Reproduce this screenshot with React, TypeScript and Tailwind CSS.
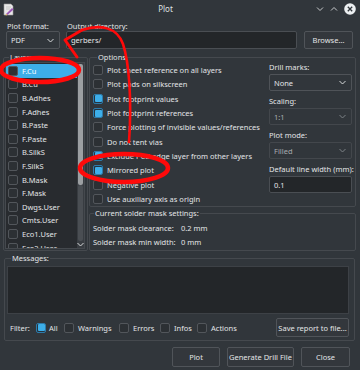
import React from 'react';

const layers = ['F.Cu', 'B.Cu', 'B.Adhes', 'F.Adhes', 'B.Paste', 'F.Paste', 'B.SilkS', 'F.SilkS', 'B.Mask', 'F.Mask', 'Dwgs.User', 'Cmts.User', 'Eco1.User', 'Eco2.User'];

const options: [string, boolean][] = [
    ['Plot sheet reference on all layers', false],
    ['Plot pads on silkscreen', false],
    ['Plot footprint values', true],
    ['Plot footprint references', true],
    ['Force plotting of invisible values/references', false],
    ['Do not tent vias', false],
    ['Exclude PCB edge layer from other layers', true],
    ['Mirrored plot', true],
    ['Negative plot', false],
    ['Use auxiliary axis as origin', false],
];

const Check = ({ on }: { on?: boolean }) => (
    <span className={`flex h-[10px] w-[10px] shrink-0 items-center justify-center rounded-[2px] border ${on ? 'border-[#2d7bab] bg-[#26343f]' : 'border-[#52565b] bg-[#2c3034]'}`}>
        {on && <span className="h-[7px] w-[7px] rounded-[1px] bg-[#3daee9]" />}
    </span>
);

const Chevron = ({ dim }: { dim?: boolean }) => (
    <svg width="7" height="5" viewBox="0 0 7 5">
        <path d="M0.5 1 L3.5 4 L6.5 1" fill="none" stroke={dim ? '#7d8186' : '#d6d8da'} strokeWidth="1" />
    </svg>
);

const Combo = ({ value, dim, className = '' }: { value: string; dim?: boolean; className?: string }) => (
    <div className={`flex items-center justify-between rounded-[2px] border ${dim ? 'border-[#43474c]' : 'border-[#4f5358]'} bg-[#31363b] pl-[4px] pr-[5px] ${className}`}>
        <span className={dim ? 'text-[#a9acaf]' : ''}>{value}</span>
        <Chevron dim={dim} />
    </div>
);

const Button = ({ children, className = '' }: { children: React.ReactNode; className?: string }) => (
    <div className={`flex items-center justify-center rounded-[2px] border border-[#505459] bg-[#33373c] ${className}`}>{children}</div>
);

const TitleBar = () => (
    <div className="flex h-[18px] items-center px-[3px]">
        <svg width="12" height="13" viewBox="0 0 12 13">
            <path d="M1 1 H8 L10 3 V12 H1 Z" fill="#e8e8e8" stroke="#9a9a9a" strokeWidth="0.6" />
            <path d="M3 4 H8 M3 6 H7" stroke="#b0b0b0" strokeWidth="0.6" />
            <path d="M3 11 L9 5 L10.5 6.5 L4.5 12 Z" fill="#9b59b6" />
            <path d="M3 11 L4.5 12 L2.6 12.4 Z" fill="#f0c040" />
        </svg>
        <div className="flex-1 text-center text-[8px] text-[#dfe1e3]">Plot</div>
        <div className="flex items-center gap-[6px] pr-[1px]">
            <svg width="8" height="6" viewBox="0 0 8 6"><path d="M1 1.5 L4 4.5 L7 1.5" fill="none" stroke="#c8cacc" strokeWidth="1" /></svg>
            <svg width="8" height="6" viewBox="0 0 8 6"><path d="M1 4.5 L4 1.5 L7 4.5" fill="none" stroke="#c8cacc" strokeWidth="1" /></svg>
            <svg width="12" height="12" viewBox="0 0 12 12">
                <circle cx="6" cy="6" r="5.8" fill="#eceff1" />
                <path d="M3.8 3.8 L8.2 8.2 M8.2 3.8 L3.8 8.2" stroke="#31363b" strokeWidth="1.3" />
            </svg>
        </div>
    </div>
);

export default function App() {
    return (
        <div className="relative flex h-[370px] w-[360px] flex-col overflow-hidden bg-[#31363b] font-['Noto_Sans',sans-serif] text-[7.5px] leading-[10px] text-[#e3e5e7]">
            <TitleBar />

            <div className="mt-[3px] flex items-end gap-[6px] pl-[6px]">
                <div className="w-[54px]">
                    <div className="h-[10px] pl-[1px]">Plot format:</div>
                    <Combo value="PDF" className="h-[18px]" />
                </div>
                <div className="w-[231px]">
                    <div className="h-[10px] pl-[1px]">Output directory:</div>
                    <div className="flex h-[18px] items-center rounded-[2px] border border-[#4a4e53] bg-[#232629] pl-[4px]">gerbers/</div>
                </div>
                <Button className="ml-[1px] h-[18px] w-[49px]">Browse...</Button>
            </div>

            <div className="mt-[3px] flex h-[199px] gap-[1px] pl-[3px]">
                <fieldset className="flex w-[85px] min-w-0 flex-col rounded-[2px] border border-[#45494e] pb-[1px] pl-[1px] pr-[2px]">
                    <legend className="ml-[4px] px-[1px]">Layers</legend>
                    <div className="flex min-h-0 flex-1 border border-[#45494e] bg-[#282b2f]">
                        <div className="flex-1 overflow-hidden pt-[1px]">
                            {layers.map((l, i) => (
                                <div key={l} className={`flex h-[13.6px] items-center gap-[4px] pl-[2px] ${i === 0 ? 'bg-[#3daee9] text-white' : ''}`}>
                                    <Check />
                                    <span>{l}</span>
                                </div>
                            ))}
                        </div>
                        <div className="flex w-[7px] flex-col items-center bg-[#383c41] py-[1px]">
                            <div className="h-[121px] w-[5px] rounded-[2px] bg-[#9c9fa2]" />
                            <div className="w-[5px] flex-1 rounded-[2px] bg-[#4a4e53]" />
                            <div className="mt-[1px]"><Chevron /></div>
                        </div>
                    </div>
                </fieldset>

                <div className="flex w-[267px] flex-col">
                    <fieldset className="flex h-[155px] rounded-[2px] border border-[#45494e] pl-[3px]">
                        <legend className="ml-[4px] px-[1px]">Options</legend>
                        <div className="flex-1 pt-[1px]">
                            {options.map(([t, on]) => (
                                <div key={t} className="flex h-[14.3px] items-center gap-[4px] whitespace-nowrap">
                                    <Check on={on} />
                                    <span>{t}</span>
                                </div>
                            ))}
                        </div>
                        <div className="flex w-[86px] flex-col gap-[5px] pr-[3px]">
                            <div>
                                <div className="h-[10px]">Drill marks:</div>
                                <Combo value="None" className="mt-[2px] h-[17px]" />
                            </div>
                            <div>
                                <div className="h-[10px]">Scaling:</div>
                                <Combo value="1:1" dim className="mt-[2px] h-[17px]" />
                            </div>
                            <div>
                                <div className="h-[10px]">Plot mode:</div>
                                <Combo value="Filled" dim className="mt-[2px] h-[17px]" />
                            </div>
                            <div>
                                <div className="h-[10px] whitespace-nowrap">Default line width (mm):</div>
                                <div className="mt-[2px] flex h-[17px] items-center rounded-[2px] border border-[#4a4e53] bg-[#232629] pl-[4px]">0.1</div>
                            </div>
                        </div>
                    </fieldset>
                    <fieldset className="mt-[1px] flex-1 rounded-[2px] border border-[#45494e] pl-[3px] pt-[3px]">
                        <legend className="ml-[1px] px-[1px]">Current solder mask settings:</legend>
                        <div className="flex h-[14px] items-center"><span className="w-[88px]">Solder mask clearance:</span><span>0.2 mm</span></div>
                        <div className="flex h-[14px] items-center"><span className="w-[88px]">Solder mask min width:</span><span>0 mm</span></div>
                    </fieldset>
                </div>
            </div>

            <fieldset className="ml-[4px] mr-[5px] mt-[2px] rounded-[2px] border border-[#45494e] px-[2px] pb-[3px]">
                <legend className="ml-[4px] px-[1px]">Messages:</legend>
                <div className="mt-[3px] h-[48px] border border-[#3d4146] bg-[#232629] mr-[3px]" />
                <div className="mt-[4px] flex h-[19px] items-center pl-[3px] pr-[3px]">
                    <span className="w-[26px]">Filter:</span>
                    <div className="flex w-[28px] items-center gap-[3px]"><Check on /><span>All</span></div>
                    <div className="flex w-[55px] items-center gap-[4px]"><Check /><span>Warnings</span></div>
                    <div className="flex w-[41px] items-center gap-[4px]"><Check /><span>Errors</span></div>
                    <div className="flex w-[37px] items-center gap-[4px]"><Check /><span>Infos</span></div>
                    <div className="flex items-center gap-[4px]"><Check /><span>Actions</span></div>
                    <Button className="ml-auto h-[19px] w-[73px]">Save report to file...</Button>
                </div>
            </fieldset>

            <div className="mt-[6px] flex justify-end gap-[7px] pr-[10px]">
                <Button className="h-[20px] w-[48px]">Plot</Button>
                <Button className="h-[20px] w-[67px]">Generate Drill File</Button>
                <Button className="h-[20px] w-[49px]">Close</Button>
            </div>

            {/* red annotations drawn over the dialog */}
            <svg className="pointer-events-none absolute inset-0" width="360" height="370" viewBox="0 0 360 370">
                <ellipse cx="40" cy="70" rx="39" ry="12" fill="none" stroke="#ff0a0a" strokeWidth="4.5" />
                <ellipse cx="124" cy="168" rx="44" ry="14" fill="none" stroke="#ff0a0a" strokeWidth="4.5" />
                <path d="M82 30 C100 24, 117 27, 123 44 C129 62, 132 100, 129 142" fill="none" stroke="#ff0a0a" strokeWidth="2.6" strokeLinecap="round" />
                <path d="M82 30 L65 40 L77 57" fill="none" stroke="#ff0a0a" strokeWidth="3" strokeLinecap="round" strokeLinejoin="round" />
            </svg>
        </div>
    );
}
